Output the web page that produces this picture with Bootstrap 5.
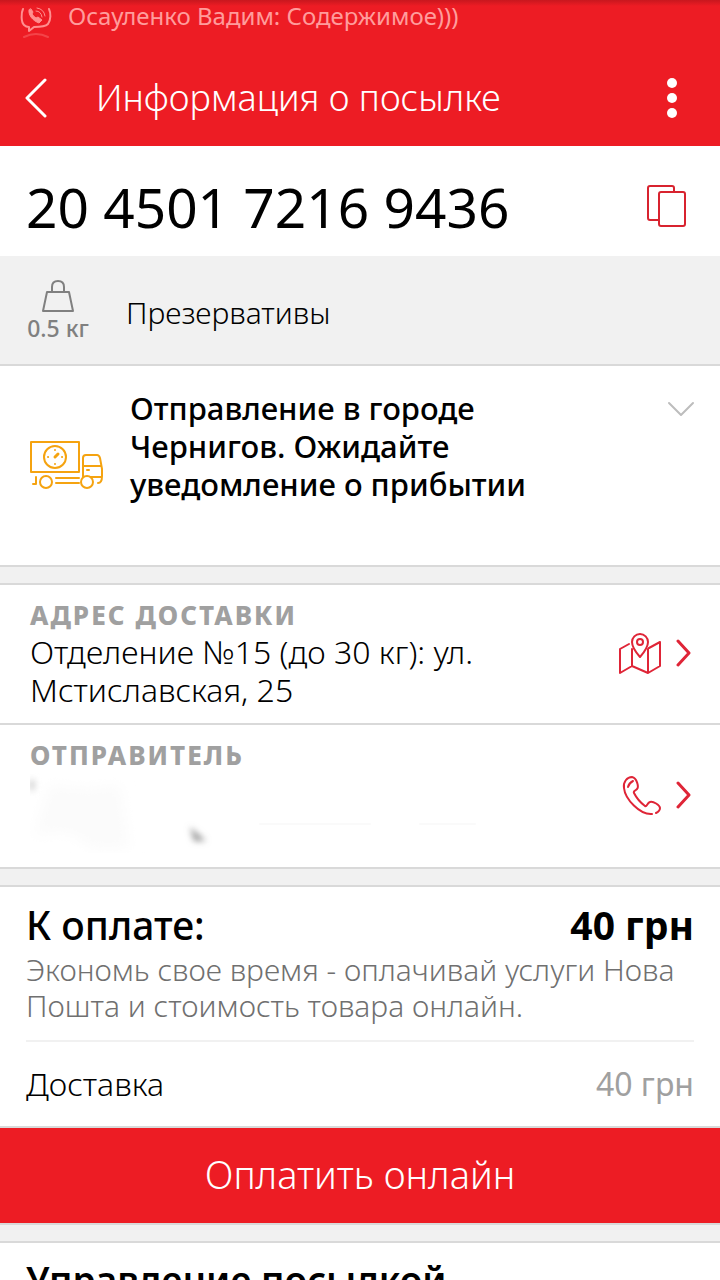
<!DOCTYPE html>
<html lang="ru">
<head>
<meta charset="utf-8">
<meta name="viewport" content="width=device-width, initial-scale=1">
<title>Информация о посылке</title>
<link href="https://cdn.jsdelivr.net/npm/bootstrap@5.3.0/dist/css/bootstrap.min.css" rel="stylesheet">
<style>
:root { --brand: #ed1c24; --line: #d9d9d9; --fill: #f1f1f1; }
body { font-family: "Noto Sans", "Open Sans", sans-serif; font-weight: 300; font-size: 32px; line-height: 38px; color: #000; background: #fff; height: 100vh; }
svg { display: block; flex: none; fill: none; stroke-linecap: round; stroke-linejoin: round; }
.app-head { background: linear-gradient(#c8171e, var(--brand) 6px); color: #fff; }
.status-line { height: 50px; font-size: 24px; line-height: 32px; font-weight: 400; color: #ff9c9c; padding: 0 20px; gap: 16px; }
.title-bar { height: 96px; padding: 0 24px; gap: 48px; }
.title-bar h1 { font-size: 36px; line-height: 48px; font-weight: 300; }
.icon-btn { background: none; border: 0; padding: 0; color: inherit; }
.parcel-no { height: 110px; padding: 12px 32px 0 26px; }
.parcel-no h2 { font-size: 55px; line-height: 72px; font-weight: 400; }
.contents { background: var(--fill); height: 110px; padding: 22px 26px 0; gap: 36px; border-bottom: 2px solid var(--line); }
.weight-box { width: 64px; font-size: 23px; line-height: 28px; font-weight: 500; color: #808080; white-space: nowrap; }
.contents-name { font-size: 30px; padding-top: 16px; }
.state { height: 199px; padding: 23px 25px 0 29px; gap: 26px; font-size: 31px; font-weight: 500; }
.gap-band { height: 20px; background: var(--fill); border: solid var(--line); border-width: 2px 0; }
.info-row { padding: 12px 28px 14px 30px; color: #000; }
.info-row.sender { min-height: 142px; border-top: 2px solid var(--line); }
.cap { font-size: 26px; line-height: 36px; font-weight: 800; letter-spacing: 2px; color: #a0a0a0; }
.row-icons { gap: 14px; }
.pay { padding: 12px 26px 0; border-bottom: 2px solid var(--line); }
.pay-total { font-size: 39px; line-height: 52px; font-weight: 500; }
.pay-note { font-size: 30px; line-height: 36px; color: #707070; padding: 1px 0 16px; border-bottom: 2px solid var(--fill); }
.pay-item { height: 84px; }
.pay-item .sum { color: #a0a0a0; font-weight: 400; }
.pay-btn { background: var(--brand); color: #fff; border: 0; height: 95px; font-size: 38px; line-height: 48px; font-weight: 300; padding: 0 0 4px; }
.manage { padding: 12px 26px; }
.manage h2 { font-size: 37px; line-height: 50px; font-weight: 600; }
</style>
</head>
<body class="overflow-hidden">
<header class="app-head">
  <div class="status-line d-flex align-items-start">
    <svg width="32" height="40" viewBox="0 0 32 40" stroke="#ff8f8f" stroke-width="2"><path d="M3 9C1 13 1 22 4 25Q6 27 9 27V31L14 27C20 27 25 27 28 24C31 20 31 13 29 9"/><path d="M9 10C8 15 13 21 19 23L22 20L18 17L16 18Q13 16 12 14L13 12L11 9Z" fill="#ff8f8f" stroke-width="1"/><path d="M16 11Q21 11 22 17M17 8Q24 9 25 16" stroke-width="1"/><path d="M4 37Q16 31 28 37" opacity=".35"/></svg>
    <span>Осауленко Вадим: Содержимое)))</span>
  </div>
  <div class="title-bar d-flex align-items-center">
    <button class="icon-btn" aria-label="Назад"><svg width="24" height="40" viewBox="0 0 24 40" stroke="#fff" stroke-width="3"><path d="M21 2L3 20L21 38"/></svg></button>
    <h1 class="m-0 flex-grow-1">Информация о посылке</h1>
    <button class="icon-btn" aria-label="Меню"><svg width="48" height="42" viewBox="0 0 48 42"><g fill="#fff"><circle cx="24" cy="6" r="5"/><circle cx="24" cy="21" r="5"/><circle cx="24" cy="36" r="5"/></g></svg></button>
  </div>
</header>
<main>
  <section class="parcel-no d-flex align-items-center justify-content-between">
    <h2 class="m-0">20 4501 7216 9436</h2>
    <button class="icon-btn" aria-label="Копировать"><svg width="42" height="44" viewBox="0 0 42 44" stroke="#d8232f" stroke-width="2"><path d="M28 6V3Q28 1 26 1H4Q2 1 2 3V33Q2 35 4 35H12"/><rect x="13" y="7" width="26" height="34" rx="2"/></svg></button>
  </section>
  <section class="contents d-flex">
    <div class="weight-box d-flex flex-column align-items-center">
      <svg width="34" height="36" viewBox="0 0 34 36" stroke="#808080" stroke-width="2" stroke-linejoin="miter"><path d="M6 14H28L32 33H2ZM11 14V9Q11 3 17 3T23 9V14"/></svg>
      <span>0.5 кг</span>
    </div>
    <div class="contents-name">Презервативы</div>
  </section>
  <section class="state d-flex">
    <svg class="mt-5" width="75" height="52" viewBox="0 0 75 52" stroke="#f5a310" stroke-width="2"><path d="M2 5H50V35H2ZM54 45V21Q54 18 57 18H68Q70 18 71 21L73 32V39Q73 46 69 46M54 29H72M54 40H72M58 33H60M4 47H7V40M27 41H50M27 46H50"/><circle cx="26" cy="20" r="11"/><path d="M26 20L29 17" stroke-width="3"/><path d="M26 13V13.1M26 27V27.1M19 20H19.1M33 20H33.1"/><circle cx="17" cy="45" r="6" fill="#fff"/><circle cx="58" cy="45" r="6" fill="#fff"/></svg>
    <div class="flex-grow-1">Отправление в городе<br>Чернигов. Ожидайте<br>уведомление о прибытии</div>
    <button class="icon-btn align-self-start mt-2" aria-label="Развернуть"><svg width="28" height="24" viewBox="0 0 28 24" stroke="#bdbdbd" stroke-width="2"><path d="M2 6L14 18L26 6"/></svg></button>
  </section>
  <div class="gap-band"></div>
  <a href="#map" class="info-row d-flex align-items-center text-decoration-none">
    <div class="flex-grow-1">
      <div class="cap">АДРЕС ДОСТАВКИ</div>
      <div>Отделение №15 (до 30 кг): ул.<br>Мстиславская, 25</div>
    </div>
    <div class="row-icons d-flex align-items-center">
      <svg width="44" height="44" viewBox="0 0 44 44" stroke="#df2537" stroke-width="2"><path d="M11 13L2 18V42L14 35L30 42L42 35V11L31 17M14 18V35M30 18V42"/><path d="M22 26Q14 17 14 11A8 8 0 0 1 30 11Q30 17 22 26Z"/><circle cx="22" cy="11" r="3"/></svg>
      <svg width="16" height="28" viewBox="0 0 16 28" stroke="#df2537" stroke-width="3"><path d="M2 2L13 14L2 26"/></svg>
    </div>
  </a>
  <a href="#call" class="info-row sender d-flex text-decoration-none">
    <div class="flex-grow-1">
      <div class="cap">ОТПРАВИТЕЛЬ</div>
      <svg width="540" height="80" viewBox="0 0 540 80"><defs><filter id="soft" x="-1" y="-1" width="3" height="3"><feGaussianBlur stdDeviation="3"/></filter><filter id="haze" x="-1" y="-1" width="3" height="3"><feGaussianBlur stdDeviation="7"/></filter></defs><path d="M20 10Q60 20 90 10L100 76H60Q40 50 2 66Z" fill="#fbfbfb" filter="url(#haze)"/><g filter="url(#soft)"><ellipse cx="2" cy="12" rx="3" ry="6" fill="#d0d0d0"/><path d="M160 54L176 68H164Z" fill="#999"/></g><path d="M230 51H340M390 51H445" stroke="#fafafa" stroke-width="2"/></svg>
    </div>
    <div class="row-icons d-flex align-items-center">
      <svg width="40" height="42" viewBox="0 0 40 42" stroke="#df2537" stroke-width="2"><path d="M30 40C18 41 3 25 2 14C1 8 5 3 10 3C15 4 17 13 15 15C13 17 11 17 12 19C14 23 19 29 23 32C25 33 25 29 28 28C31 27 38 31 38 34Q38 37 34 39M6 13Q7 9 11 7"/></svg>
      <svg width="16" height="28" viewBox="0 0 16 28" stroke="#df2537" stroke-width="3"><path d="M2 2L13 14L2 26"/></svg>
    </div>
  </a>
  <div class="gap-band"></div>
  <section class="pay">
    <div class="pay-total d-flex justify-content-between"><span>К оплате:</span><strong>40 грн</strong></div>
    <div class="pay-note">Экономь свое время - оплачивай услуги Нова<br>Пошта и стоимость товара онлайн.</div>
    <div class="pay-item d-flex align-items-center justify-content-between"><span>Доставка</span><span class="sum">40 грн</span></div>
  </section>
  <button class="pay-btn w-100 d-block">Оплатить онлайн</button>
  <div class="gap-band"></div>
  <section class="manage"><h2 class="m-0">Управление посылкой</h2></section>
</main>
<script src="https://cdn.jsdelivr.net/npm/bootstrap@5.3.0/dist/js/bootstrap.bundle.min.js"></script>
</body>
</html>
